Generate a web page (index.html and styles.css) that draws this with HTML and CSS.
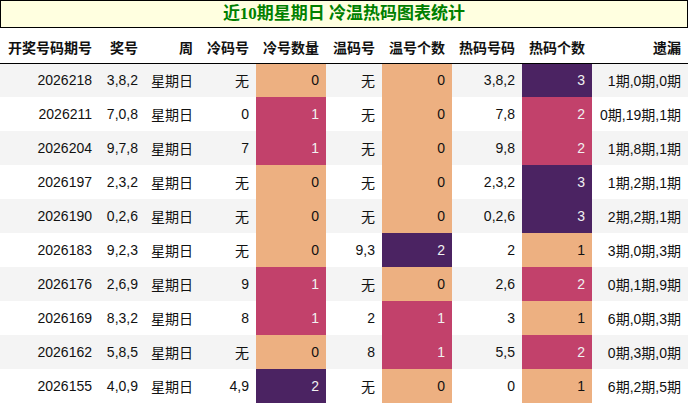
FILE: index.html
```html
<!DOCTYPE html>
<html lang="zh">
<head>
<meta charset="utf-8">
<link rel="stylesheet" href="styles.css">
</head>
<body>
<div class="title">近10期星期日 冷温热码图表统计</div>
<table class="stats">
<colgroup>
<col class="c-issue"><col class="c-num"><col class="c-week"><col class="c-code"><col class="c-count"><col class="c-code"><col class="c-count"><col class="c-count"><col class="c-count"><col class="c-miss">
</colgroup>
<thead>
<tr><th>开奖号码期号</th><th>奖号</th><th>周</th><th>冷码号</th><th>冷号数量</th><th>温码号</th><th>温号个数</th><th>热码号码</th><th>热码个数</th><th>遗漏</th></tr>
</thead>
<tbody>
<tr><td>2026218</td><td>3,8,2</td><td>星期日</td><td>无</td><td class="lo">0</td><td>无</td><td class="lo">0</td><td>3,8,2</td><td class="hi">3</td><td>1期,0期,0期</td></tr>
<tr><td>2026211</td><td>7,0,8</td><td>星期日</td><td>0</td><td class="mid">1</td><td>无</td><td class="lo">0</td><td>7,8</td><td class="mid">2</td><td>0期,19期,1期</td></tr>
<tr><td>2026204</td><td>9,7,8</td><td>星期日</td><td>7</td><td class="mid">1</td><td>无</td><td class="lo">0</td><td>9,8</td><td class="mid">2</td><td>1期,8期,1期</td></tr>
<tr><td>2026197</td><td>2,3,2</td><td>星期日</td><td>无</td><td class="lo">0</td><td>无</td><td class="lo">0</td><td>2,3,2</td><td class="hi">3</td><td>1期,2期,1期</td></tr>
<tr><td>2026190</td><td>0,2,6</td><td>星期日</td><td>无</td><td class="lo">0</td><td>无</td><td class="lo">0</td><td>0,2,6</td><td class="hi">3</td><td>2期,2期,1期</td></tr>
<tr><td>2026183</td><td>9,2,3</td><td>星期日</td><td>无</td><td class="lo">0</td><td>9,3</td><td class="hi">2</td><td>2</td><td class="lo">1</td><td>3期,0期,3期</td></tr>
<tr><td>2026176</td><td>2,6,9</td><td>星期日</td><td>9</td><td class="mid">1</td><td>无</td><td class="lo">0</td><td>2,6</td><td class="mid">2</td><td>0期,1期,9期</td></tr>
<tr><td>2026169</td><td>8,3,2</td><td>星期日</td><td>8</td><td class="mid">1</td><td>2</td><td class="mid">1</td><td>3</td><td class="lo">1</td><td>6期,0期,3期</td></tr>
<tr><td>2026162</td><td>5,8,5</td><td>星期日</td><td>无</td><td class="lo">0</td><td>8</td><td class="mid">1</td><td>5,5</td><td class="mid">2</td><td>0期,3期,0期</td></tr>
<tr><td>2026155</td><td>4,0,9</td><td>星期日</td><td>4,9</td><td class="hi">2</td><td>无</td><td class="lo">0</td><td>0</td><td class="lo">1</td><td>6期,2期,5期</td></tr>
</tbody>
</table>
</body>
</html>
```
FILE: styles.css
```css
html, body {
  margin: 0;
  padding: 0;
  background: #ffffff;
}
body {
  width: 688px;
  font-family: "Liberation Sans", "Noto Sans CJK SC", sans-serif;
  font-size: 14px;
  color: #111111;
}
.title {
  box-sizing: border-box;
  height: 28px;
  border: 1px solid #000000;
  background: #ffffe0;
  color: #008000;
  font-family: "Liberation Serif", "Noto Sans CJK SC", serif;
  font-weight: bold;
  font-size: 17px;
  line-height: 26px;
  text-align: center;
}
.stats {
  width: 688px;
  table-layout: fixed;
  border-collapse: collapse;
  border-spacing: 0;
}
.c-issue { width: 99px; }
.c-num { width: 46px; }
.c-week { width: 55px; }
.c-code { width: 56px; }
.c-count { width: 70px; }
.c-miss { width: 96px; }
.stats col:nth-child(2) { width: 46px; }
.stats th {
  height: 35px;
  box-sizing: border-box;
  padding: 3px 7px 0 0;
  text-align: right;
  font-weight: bold;
  white-space: nowrap;
  border-bottom: 1px solid #000000;
  vertical-align: middle;
}
.stats td {
  height: 34px;
  box-sizing: border-box;
  padding: 0 7px 0 0;
  text-align: right;
  white-space: nowrap;
  vertical-align: middle;
}
.stats tbody tr:nth-child(odd) { background: #f4f4f4; }
.stats tbody tr:nth-child(even) { background: #ffffff; }
.stats td.lo { background: #edb081; color: #111111; }
.stats td.mid { background: #c2416b; color: #f1f1f1; }
.stats td.hi { background: #4b2362; color: #f1f1f1; }
```
